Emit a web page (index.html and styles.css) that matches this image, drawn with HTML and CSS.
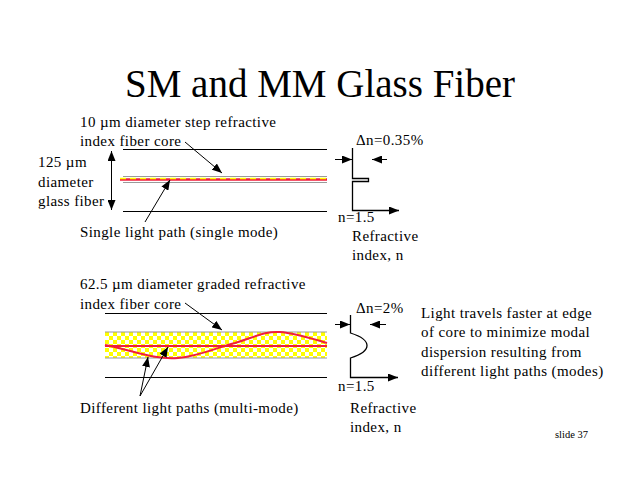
FILE: index.html
```html
<!DOCTYPE html>
<html>
<head>
<meta charset="utf-8">
<title>SM and MM Glass Fiber</title>
<link rel="stylesheet" href="styles.css">
</head>
<body>
<div class="slide">
  <h1 class="title">SM and MM Glass Fiber</h1>
  <div class="diagram">
    <svg class="canvas" width="640" height="370" viewBox="0 110 640 370" xmlns="http://www.w3.org/2000/svg">
      <defs>
        <marker id="ah" viewBox="0 0 10 8" refX="10" refY="4" markerWidth="10" markerHeight="8" markerUnits="userSpaceOnUse" orient="auto">
          <path d="M0,0 L10,4 L0,8 Z" class="head"/>
        </marker>
        <marker id="ahs" viewBox="0 0 10 8" refX="10" refY="4" markerWidth="10" markerHeight="8" markerUnits="userSpaceOnUse" orient="auto-start-reverse">
          <path d="M0,0 L10,4 L0,8 Z" class="head"/>
        </marker>
        <pattern id="check" width="8" height="8" patternUnits="userSpaceOnUse" x="105" y="332">
          <rect x="0" y="0" width="8" height="8" class="white"/>
          <rect x="0" y="0" width="4" height="4" class="yellow"/>
          <rect x="4" y="4" width="4" height="4" class="yellow"/>
        </pattern>
      </defs>

      <!-- upper single-mode fiber -->
      <line x1="123" y1="149.5" x2="327" y2="149.5" class="ln"/>
      <line x1="123" y1="211.5" x2="327" y2="211.5" class="ln"/>
      <line x1="123" y1="176.5" x2="327" y2="176.5" class="grey"/>
      <line x1="123" y1="182.5" x2="327" y2="182.5" class="grey"/>
      <line x1="120" y1="179.5" x2="327" y2="179.5" class="red-core"/>
      <line x1="120" y1="178.5" x2="327" y2="178.5" class="yellow-dash"/>
      <line x1="111.5" y1="151" x2="111.5" y2="210" class="ln" marker-start="url(#ahs)" marker-end="url(#ah)"/>
      <line x1="185" y1="142" x2="222" y2="173" class="ln" marker-end="url(#ah)"/>
      <line x1="145" y1="222" x2="170" y2="180" class="ln" marker-end="url(#ah)"/>

      <!-- step index profile -->
      <polyline points="352.5,148 352.5,178.5 368.5,178.5 368.5,181.5 352.5,181.5 352.5,210.5 399,210.5" class="prof" marker-end="url(#ah)"/>
      <line x1="335" y1="159.5" x2="352" y2="159.5" class="ln" marker-end="url(#ah)"/>
      <line x1="387" y1="159.5" x2="372" y2="159.5" class="ln" marker-end="url(#ah)"/>

      <!-- lower multi-mode fiber -->
      <line x1="105" y1="313.5" x2="327" y2="313.5" class="ln"/>
      <line x1="105" y1="377.5" x2="327" y2="377.5" class="ln"/>
      <rect x="105" y="332" width="222" height="26" fill="url(#check)"/>
      <line x1="105" y1="332" x2="327" y2="332" class="grey"/>
      <line x1="105" y1="358" x2="327" y2="358" class="grey"/>
      <line x1="105" y1="346" x2="327" y2="346" class="red-path"/>
      <path d="M105,345 C135,351 155,360 178,358 C200,356 215,348 235,343 C255,337 265,331 280,332 C295,333 310,338 327,343" class="red-path"/>
      <line x1="185" y1="303" x2="222" y2="330" class="ln" marker-end="url(#ah)"/>
      <line x1="140" y1="396" x2="148" y2="357" class="ln" marker-end="url(#ah)"/>
      <line x1="140" y1="396" x2="168" y2="347" class="ln" marker-end="url(#ah)"/>

      <!-- graded index profile -->
      <path d="M350.5,315 L350.5,333 C360,336 367,340 367,345.5 C367,351 360,355 350.5,358 L350.5,377.5 L398,377.5" class="prof" marker-end="url(#ah)"/>
      <line x1="335" y1="324.5" x2="350" y2="324.5" class="ln" marker-end="url(#ah)"/>
      <line x1="386" y1="324.5" x2="370" y2="324.5" class="ln" marker-end="url(#ah)"/>

      <!-- labels -->
      <text x="80" y="127" class="lbl">10 µm diameter step refractive</text>
      <text x="80" y="146" class="lbl">index fiber core</text>
      <text x="38" y="167" class="lbl">125 µm</text>
      <text x="38" y="187" class="lbl">diameter</text>
      <text x="38" y="206" class="lbl">glass fiber</text>
      <text x="80" y="237" class="lbl">Single light path (single mode)</text>
      <text x="356" y="145" class="lbl">Δn=0.35%</text>
      <text x="338" y="222" class="lbl">n=1.5</text>
      <text x="352" y="241" class="lbl">Refractive</text>
      <text x="352" y="260" class="lbl">index, n</text>

      <text x="80" y="289" class="lbl">62.5 µm diameter graded refractive</text>
      <text x="80" y="309" class="lbl">index fiber core</text>
      <text x="80" y="413" class="lbl">Different light paths (multi-mode)</text>
      <text x="356" y="313" class="lbl">Δn=2%</text>
      <text x="338" y="391" class="lbl">n=1.5</text>
      <text x="350" y="413" class="lbl">Refractive</text>
      <text x="350" y="432" class="lbl">index, n</text>

      <text class="lbl">
        <tspan x="421" y="318">Light travels faster at edge</tspan>
        <tspan x="421" y="337">of core to minimize modal</tspan>
        <tspan x="421" y="357">dispersion resulting from</tspan>
        <tspan x="421" y="376">different light paths (modes)</tspan>
      </text>
      <text x="555" y="438" class="small">slide 37</text>
    </svg>
  </div>
</div>
</body>
</html>
```

FILE: styles.css
```css
html, body {
  margin: 0;
  padding: 0;
  background: #ffffff;
}

.slide {
  width: 640px;
  height: 480px;
  background: #ffffff;
  overflow: hidden;
}

.title {
  margin: 0;
  height: 110px;
  padding-top: 64px;
  box-sizing: border-box;
  font-family: "Liberation Serif", "Times New Roman", serif;
  font-weight: normal;
  font-size: 39px;
  line-height: 39px;
  text-align: center;
  color: #000000;
}

.diagram {
  height: 370px;
}

.canvas {
  display: block;
}

.ln {
  stroke: #000000;
  stroke-width: 1;
  fill: none;
}

.prof {
  stroke: #000000;
  stroke-width: 1.3;
  fill: none;
}

.head {
  fill: #000000;
}

.grey {
  stroke: #9a9a9a;
  stroke-width: 1;
}

.red-core {
  stroke: #f01e3c;
  stroke-width: 2.5;
}

.yellow-dash {
  stroke: #ffff00;
  stroke-width: 1.5;
  stroke-dasharray: 6 4;
}

.red-path {
  stroke: #f01e3c;
  stroke-width: 2;
  fill: none;
}

.yellow {
  fill: #ffff00;
}

.white {
  fill: #ffffff;
}

.lbl {
  font-family: "Liberation Serif", "Times New Roman", serif;
  font-size: 15px;
  letter-spacing: 0.4px;
  fill: #000000;
}

.small {
  font-family: "Liberation Serif", "Times New Roman", serif;
  font-size: 10.5px;
  fill: #000000;
}
```
